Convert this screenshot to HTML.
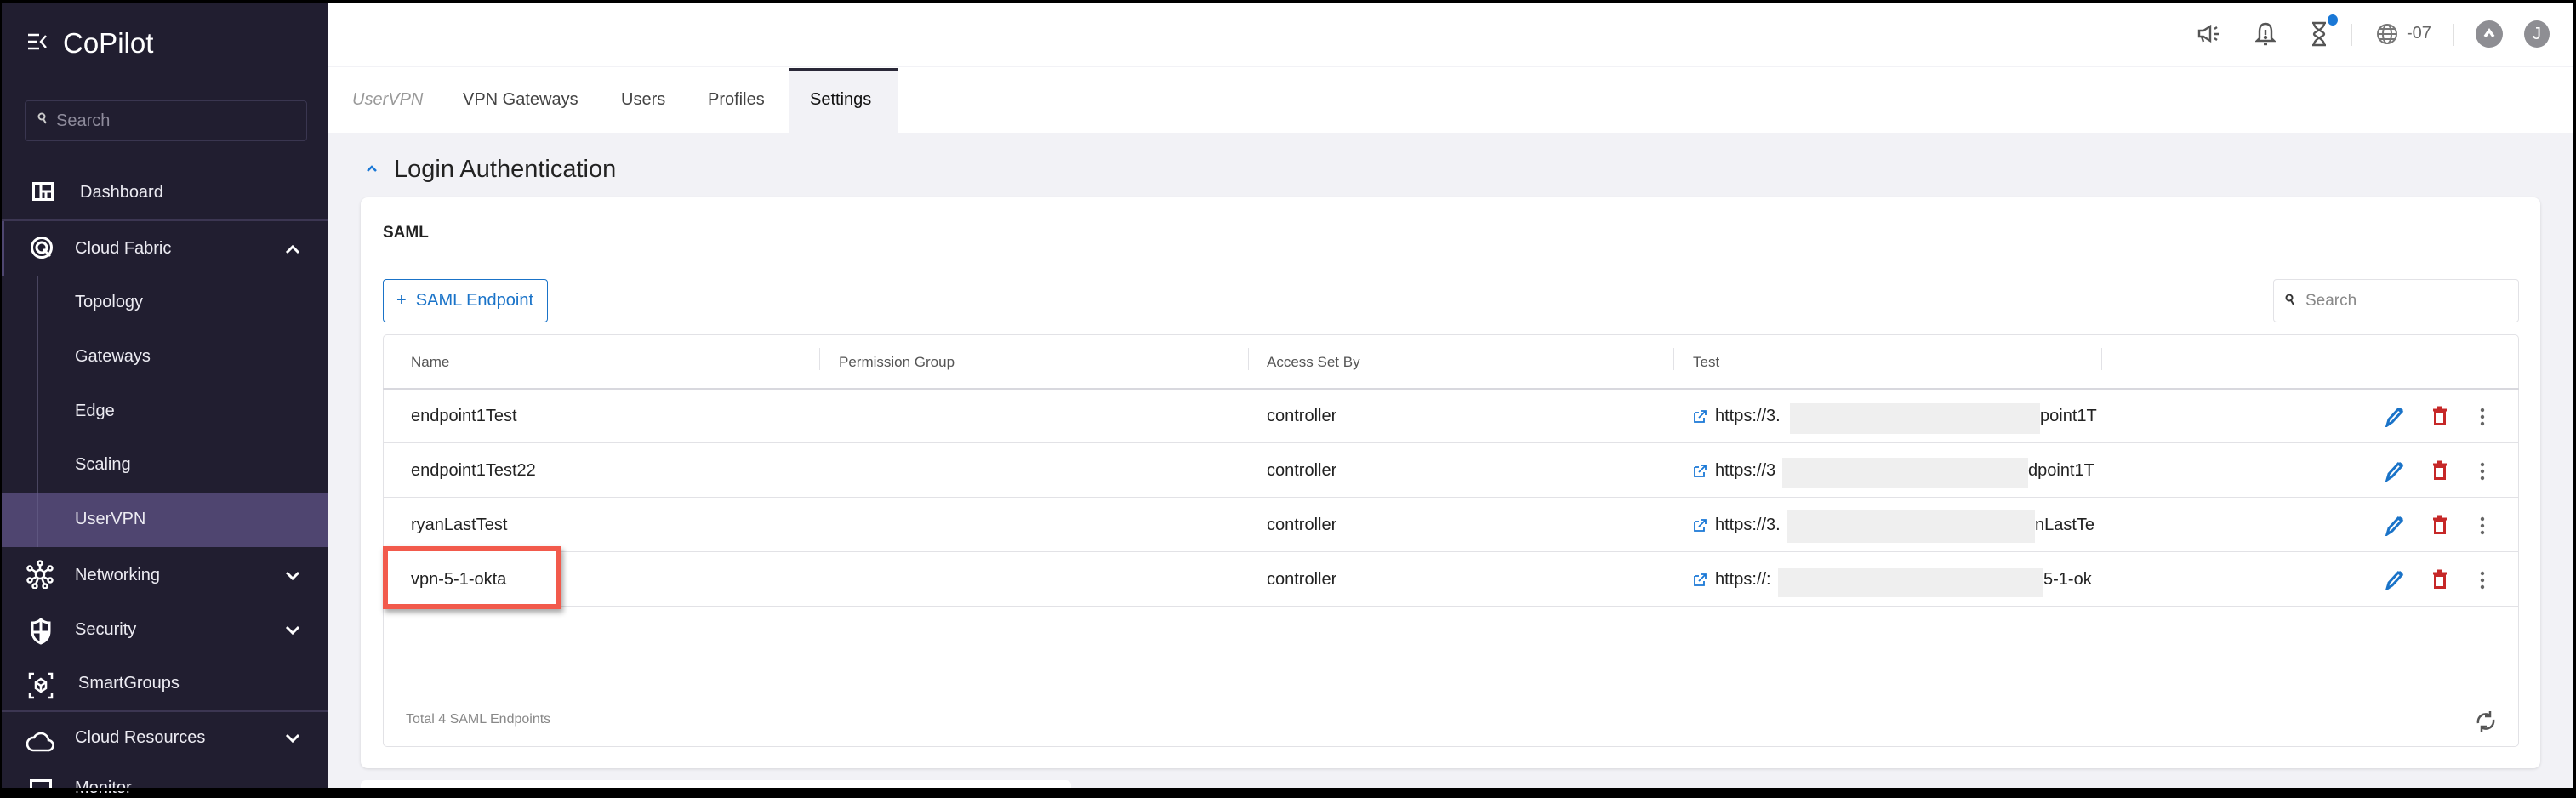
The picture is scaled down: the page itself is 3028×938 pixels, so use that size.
<!DOCTYPE html>
<html><head><meta charset="utf-8"><style>
*{margin:0;padding:0;box-sizing:border-box}
body{width:3028px;height:930px;background:#000;position:relative;overflow:hidden;font-family:"Liberation Sans",sans-serif}
.a{position:absolute}
#sb{left:2px;top:4px;width:384px;height:922px;background:#211e30;color:#ecebf2}
#main{left:386px;top:4px;width:2638px;height:922px;background:#f2f2f6}
.si{position:absolute;font-size:20px;color:#ecebf2;line-height:24px}
.ic{position:absolute}
.th{position:absolute;font-size:17px;color:#555;top:416px}
.td{position:absolute;font-size:20px;color:#222}
.hl{position:absolute;height:1px;background:#e2e2e6;left:450px;width:2511px}
</style></head><body>
<div id="sb" class="a">
  <svg class="ic" style="left:30px;top:34px" width="24" height="22" viewBox="0 0 24 22" fill="none" stroke="#fff" stroke-width="2.4"><path d="M1 3h13M1 11h11M1 19h13M22 4l-6 7 6 7"/></svg>
  <div class="si" style="left:72px;top:28px;font-size:33px;line-height:38px;color:#fff">CoPilot</div>
  <div class="a" style="left:27px;top:114px;width:332px;height:48px;border:1.5px solid #3a3650;border-radius:4px"></div>
  <svg class="ic" style="left:42px;top:128px" width="12" height="16" viewBox="0 0 12 16" fill="none" stroke="#ccc" stroke-width="2"><circle cx="5" cy="5" r="3.5"/><path d="M7 8l3 5"/></svg>
  <div class="si" style="left:64px;top:126px;color:#8f8c9c">Search</div>
  <svg class="ic" style="left:36px;top:210px" width="25" height="22" viewBox="0 0 25 22" fill="none" stroke="#fff" stroke-width="3"><rect x="1.5" y="1.5" width="22" height="19"/><path d="M10 3v17M10 11h13M16 11v9"/></svg>
  <div class="si" style="left:92px;top:210px">Dashboard</div>
  <div class="a" style="left:0;top:254px;width:384px;height:2px;background:#3c3652"></div>
  <div class="a" style="left:0;top:256px;width:3px;height:64px;background:#4e4670"></div>
  <svg class="ic" style="left:33px;top:273px" width="28" height="28" viewBox="0 0 28 28" fill="none" stroke="#fff" stroke-width="3"><circle cx="14" cy="14" r="11.5"/><circle cx="14" cy="14" r="6"/><path d="M16 16l8 8"/></svg>
  <div class="si" style="left:86px;top:276px">Cloud Fabric</div>
  <svg class="ic" style="left:333px;top:283px" width="18" height="12" viewBox="0 0 18 12" fill="none" stroke="#fff" stroke-width="3"><path d="M2 10l7-7 7 7"/></svg>
  <div class="a" style="left:42px;top:320px;width:1px;height:319px;background:#4a4660"></div>
  <div class="si" style="left:86px;top:339px">Topology</div>
  <div class="si" style="left:86px;top:403px">Gateways</div>
  <div class="si" style="left:86px;top:467px">Edge</div>
  <div class="si" style="left:86px;top:530px">Scaling</div>
  <div class="a" style="left:0;top:575px;width:384px;height:64px;background:#4f4570"></div>
  <div class="a" style="left:42px;top:575px;width:1px;height:64px;background:#5e5680"></div>
  <div class="si" style="left:86px;top:594px">UserVPN</div>
  <svg class="ic" style="left:28px;top:654px" width="34" height="34" viewBox="0 0 34 34" fill="none" stroke="#fff" stroke-width="2.5"><circle cx="17" cy="17" r="5"/><circle cx="17" cy="4" r="2.5"/><circle cx="5" cy="10" r="2.5"/><circle cx="29" cy="10" r="2.5"/><circle cx="5" cy="24" r="2.5"/><circle cx="29" cy="24" r="2.5"/><circle cx="11" cy="31" r="2.5"/><circle cx="23" cy="31" r="2.5"/><path d="M17 7v5M7 11l6 4M27 11l-6 4M7 23l6-3M27 23l-6-3M12 29l3-8M22 29l-3-8"/></svg>
  <div class="si" style="left:86px;top:660px">Networking</div>
  <svg class="ic" style="left:333px;top:667px" width="18" height="12" viewBox="0 0 18 12" fill="none" stroke="#fff" stroke-width="3"><path d="M2 2l7 7 7-7"/></svg>
  <svg class="ic" style="left:34px;top:722px" width="24" height="32" viewBox="0 0 24 32" fill="none" stroke="#fff" stroke-width="3"><path d="M12 2c3 3 6 4 10 4v10c0 8-5 12-10 14C7 28 2 24 2 16V6c4 0 7-1 10-4z"/><path d="M12 3v14H3" /><path d="M12 17h9c0 6-4 10-9 12z" fill="#fff"/></svg>
  <div class="si" style="left:86px;top:724px">Security</div>
  <svg class="ic" style="left:333px;top:731px" width="18" height="12" viewBox="0 0 18 12" fill="none" stroke="#fff" stroke-width="3"><path d="M2 2l7 7 7-7"/></svg>
  <svg class="ic" style="left:31px;top:786px" width="30" height="32" viewBox="0 0 30 32" fill="none" stroke="#fff" stroke-width="2.5"><path d="M2 8V2h5M23 2h5v6M2 24v6h5M23 30h5v-6"/><path d="M15 8l6 4v7l-6 4-6-4v-7z M9 12l6 4 6-4M15 16v7"/></svg>
  <div class="si" style="left:90px;top:787px">SmartGroups</div>
  <div class="a" style="left:0;top:831px;width:384px;height:2px;background:#3c3652"></div>
  <svg class="ic" style="left:29px;top:852px" width="32" height="28" viewBox="0 0 32 28" fill="none" stroke="#fff" stroke-width="2.6"><path d="M8 26h17a6 6 0 0 0 1-12 9 9 0 0 0-17-3A7 7 0 0 0 8 26z"/></svg>
  <div class="si" style="left:86px;top:851px">Cloud Resources</div>
  <svg class="ic" style="left:333px;top:858px" width="18" height="12" viewBox="0 0 18 12" fill="none" stroke="#fff" stroke-width="3"><path d="M2 2l7 7 7-7"/></svg>
  <div class="a" style="left:33px;top:912px;width:26px;height:12px;border:3px solid #fff;border-bottom:none"></div>
  <div class="si" style="left:86px;top:910px">Monitor</div>
</div>
<div id="main" class="a">
  <div class="a" style="left:0;top:0;width:2638px;height:74px;background:#fff;border-bottom:1.5px solid #e2e2e6"></div>
  <div class="a" style="left:0;top:75px;width:2638px;height:77px;background:#fff"></div>
</div>
<!-- top bar icons -->
<svg class="a" style="left:2583px;top:29px" width="28" height="22" viewBox="0 0 28 22" fill="none" stroke="#555" stroke-width="2.4"><path d="M2 7h5l8-5v17l-8-5H2z M5 14l2 6"/><path d="M20 5l3-2M20 11h5M20 16l3 2" /></svg>
<svg class="a" style="left:2651px;top:25px" width="24" height="30" viewBox="0 0 24 30" fill="none" stroke="#555" stroke-width="2.4"><path d="M12 3c-5 0-7 4-7 9v8l-3 3h20l-3-3v-8c0-5-2-9-7-9z M12 10v6"/><circle cx="12" cy="19" r="1" fill="#555"/><path d="M10 27h4"/></svg>
<svg class="a" style="left:2716px;top:25px" width="20" height="30" viewBox="0 0 20 30" fill="none" stroke="#555" stroke-width="2.4"><path d="M2 2h16M2 28h16M4 2c0 8 12 10 12 13S4 20 4 28M16 2c0 8-12 10-12 13s12 5 12 13"/></svg>
<div class="a" style="left:2736px;top:17px;width:12px;height:13px;border-radius:50%;background:#1a78d6"></div>
<div class="a" style="left:2764px;top:28px;width:1px;height:26px;background:#e0e0e0"></div>
<svg class="a" style="left:2793px;top:27px" width="26" height="26" viewBox="0 0 26 26" fill="none" stroke="#777" stroke-width="2"><circle cx="13" cy="13" r="11"/><ellipse cx="13" cy="13" rx="5" ry="11"/><path d="M2 13h22M4 7h18M4 19h18"/></svg>
<div class="a" style="left:2829px;top:28px;font-size:20px;color:#666">-07</div>
<div class="a" style="left:2884px;top:28px;width:1px;height:26px;background:#e0e0e0"></div>
<div class="a" style="left:2910px;top:24px;width:32px;height:32px;border-radius:50%;background:#8e8e93"></div>
<svg class="a" style="left:2919px;top:33px" width="14" height="12" viewBox="0 0 14 12" fill="none" stroke="#fff" stroke-width="3.5"><path d="M2 10l5-7 5 7"/></svg>
<div class="a" style="left:2967px;top:24px;width:30px;height:32px;border-radius:50%;background:#8e8e93;color:#fff;font-size:20px;text-align:center;line-height:32px">J</div>
<!-- tabs -->
<div class="a" style="left:928px;top:80px;width:127px;height:76px;background:#f2f2f6;border-top:3px solid #2a2838"></div>
<div class="a" style="left:414px;top:106px;font-size:20px;color:#999;font-style:italic">UserVPN</div>
<div class="a" style="left:544px;top:106px;font-size:20px;color:#444">VPN Gateways</div>
<div class="a" style="left:730px;top:106px;font-size:20px;color:#444">Users</div>
<div class="a" style="left:832px;top:106px;font-size:20px;color:#444">Profiles</div>
<div class="a" style="left:952px;top:106px;font-size:20px;color:#111">Settings</div>
<!-- section -->
<svg class="a" style="left:430px;top:193px" width="14" height="10" viewBox="0 0 14 10" fill="none" stroke="#1a78d6" stroke-width="2.5"><path d="M2 8l5-5 5 5"/></svg>
<div class="a" style="left:463px;top:183px;font-size:29px;color:#222">Login Authentication</div>
<div class="a" style="left:424px;top:232px;width:2562px;height:671px;background:#fff;border-radius:8px;box-shadow:0 1px 3px rgba(0,0,0,.12)"></div>
<div class="a" style="left:450px;top:263px;font-size:19px;font-weight:bold;color:#222">SAML</div>
<div class="a" style="left:450px;top:328px;width:194px;height:51px;border:1.5px solid #1a73c8;border-radius:4px;color:#1a73c8;font-size:20px;line-height:48px;padding-left:15px">+&nbsp; SAML Endpoint</div>
<div class="a" style="left:2672px;top:328px;width:289px;height:51px;border:1.5px solid #e2e2e6;border-radius:4px"></div>
<svg class="a" style="left:2686px;top:345px" width="12" height="16" viewBox="0 0 12 16" fill="none" stroke="#333" stroke-width="2"><circle cx="5" cy="5" r="3.5"/><path d="M7 8l3 5"/></svg>
<div class="a" style="left:2710px;top:343px;font-size:19px;color:#888">Search</div>
<!-- table -->
<div class="a" style="left:450px;top:393px;width:2511px;height:485px;border:1.5px solid #e2e2e6;border-radius:5px"></div>
<div class="th" style="left:483px">Name</div>
<div class="a" style="left:963px;top:409px;width:1px;height:26px;background:#e2e2e6"></div>
<div class="th" style="left:986px">Permission Group</div>
<div class="a" style="left:1467px;top:409px;width:1px;height:26px;background:#e2e2e6"></div>
<div class="th" style="left:1489px">Access Set By</div>
<div class="a" style="left:1967px;top:409px;width:1px;height:26px;background:#e2e2e6"></div>
<div class="th" style="left:1990px">Test</div>
<div class="a" style="left:2470px;top:409px;width:1px;height:26px;background:#e2e2e6"></div>
<div class="hl" style="top:456px;height:2px;background:#d8d8de"></div>
<div class="hl" style="top:520px"></div>
<div class="hl" style="top:584px"></div>
<div class="hl" style="top:648px"></div>
<div class="hl" style="top:712px"></div>
<div class="hl" style="top:814px"></div>

<div class="td" style="left:483px;top:478px">endpoint1Test</div>
<div class="td" style="left:483px;top:542px">endpoint1Test22</div>
<div class="td" style="left:483px;top:606px">ryanLastTest</div>
<div class="td" style="left:1489px;top:478px">controller</div>
<div class="td" style="left:1489px;top:542px">controller</div>
<div class="td" style="left:1489px;top:606px">controller</div>
<div class="td" style="left:1489px;top:670px">controller</div>

<div class="td" style="left:2016px;top:478px">https://3.</div>
<div class="td" style="left:2016px;top:542px">https://3</div>
<div class="td" style="left:2016px;top:606px">https://3.</div>
<div class="td" style="left:2016px;top:670px">https://:</div>
<div class="a" style="left:2104px;top:474px;width:294px;height:36px;background:#efefef"></div>
<div class="a" style="left:2095px;top:538px;width:289px;height:36px;background:#efefef"></div>
<div class="a" style="left:2100px;top:600px;width:292px;height:38px;background:#efefef"></div>
<div class="a" style="left:2090px;top:668px;width:312px;height:34px;background:#efefef"></div>
<div class="td" style="left:2398px;top:478px">point1T</div>
<div class="td" style="left:2384px;top:542px">dpoint1T</div>
<div class="td" style="left:2392px;top:606px">nLastTe</div>
<div class="td" style="left:2402px;top:670px">5-1-ok</div>

<!-- row icons -->
<svg width="0" height="0" style="position:absolute"><defs>
<g id="lk"><path d="M1 3h5M1 3v11h11v-5" fill="none" stroke="#1a78d6" stroke-width="1.8"/><path d="M6 9l7-7M9 1h5v5" fill="none" stroke="#1a78d6" stroke-width="1.8"/></g>
<g id="pn"><path d="M3 22l2-7 11-12 4 3-11 12z" fill="none" stroke="#1a73c8" stroke-width="3"/><path d="M16 3l2-2 4 3-2 2z" fill="#1a73c8"/></g>
<g id="tr"><path d="M2 5h16M7 2h6" stroke="#c62828" stroke-width="3"/><rect x="4.5" y="7.5" width="11" height="14" fill="none" stroke="#c62828" stroke-width="3"/></g>
<g id="dt" fill="#666"><circle cx="3" cy="3" r="2.2"/><circle cx="3" cy="11" r="2.2"/><circle cx="3" cy="19" r="2.2"/></g>
</defs></svg>
<svg class="a" style="left:1991px;top:482px" width="16" height="16"><use href="#lk"/></svg>
<svg class="a" style="left:1991px;top:546px" width="16" height="16"><use href="#lk"/></svg>
<svg class="a" style="left:1991px;top:610px" width="16" height="16"><use href="#lk"/></svg>
<svg class="a" style="left:1991px;top:674px" width="16" height="16"><use href="#lk"/></svg>
<svg class="a" style="left:2803px;top:478px" width="24" height="24"><use href="#pn"/></svg>
<svg class="a" style="left:2803px;top:542px" width="24" height="24"><use href="#pn"/></svg>
<svg class="a" style="left:2803px;top:606px" width="24" height="24"><use href="#pn"/></svg>
<svg class="a" style="left:2803px;top:670px" width="24" height="24"><use href="#pn"/></svg>
<svg class="a" style="left:2858px;top:477px" width="20" height="24"><use href="#tr"/></svg>
<svg class="a" style="left:2858px;top:541px" width="20" height="24"><use href="#tr"/></svg>
<svg class="a" style="left:2858px;top:605px" width="20" height="24"><use href="#tr"/></svg>
<svg class="a" style="left:2858px;top:669px" width="20" height="24"><use href="#tr"/></svg>
<svg class="a" style="left:2915px;top:479px" width="6" height="22"><use href="#dt"/></svg>
<svg class="a" style="left:2915px;top:543px" width="6" height="22"><use href="#dt"/></svg>
<svg class="a" style="left:2915px;top:607px" width="6" height="22"><use href="#dt"/></svg>
<svg class="a" style="left:2915px;top:671px" width="6" height="22"><use href="#dt"/></svg>

<div class="a" style="left:477px;top:837px;font-size:16px;color:#888">Total 4 SAML Endpoints</div>
<svg class="a" style="left:2908px;top:834px" width="28" height="28" viewBox="0 0 28 28" fill="none" stroke="#555" stroke-width="2.5"><path d="M5 16a9 9 0 0 1 14-9M23 12a9 9 0 0 1-14 9"/><path d="M19 2v6h-6M9 26v-6h6"/></svg>

<!-- highlight box -->
<div class="a" style="left:450px;top:642px;width:210px;height:74px;border:6px solid #f25a4c;background:#fff;box-shadow:2px 4px 6px rgba(0,0,0,.35)"></div>
<div class="td" style="left:483px;top:670px">vpn-5-1-okta</div>

<div class="a" style="left:424px;top:917px;width:835px;height:12px;background:#fff;border-radius:6px 6px 0 0"></div>
<div class="a" style="left:0;top:926px;width:3028px;height:4px;background:#000"></div>
</body></html>
